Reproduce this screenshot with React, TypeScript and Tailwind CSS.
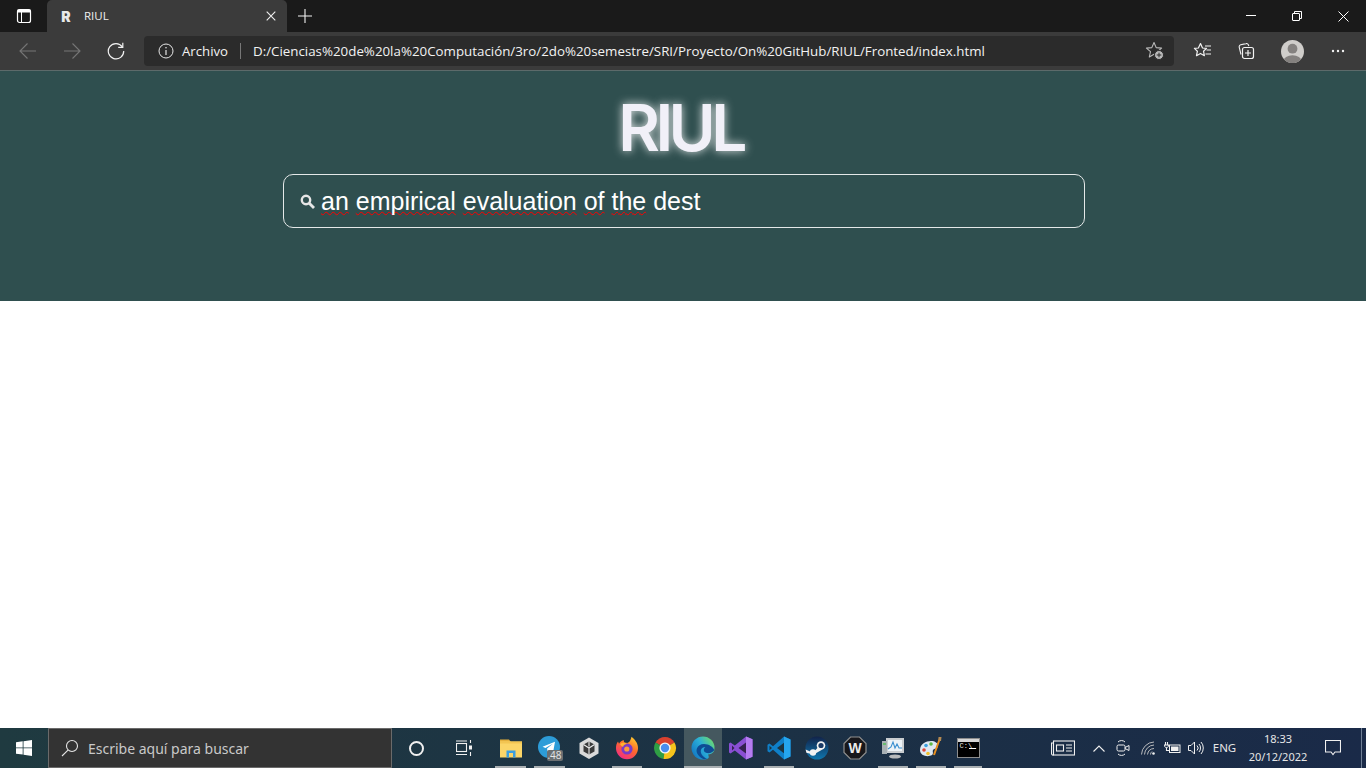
import type { ReactNode } from 'react'

const chromeFont = "font-['Open_Sans',sans-serif]"

function Win({ children, w = 16, h = 16, vb = '0 0 16 16' }: { children: ReactNode; w?: number; h?: number; vb?: string }) {
  return (
    <svg width={w} height={h} viewBox={vb} fill="none" className="block shrink-0">
      {children}
    </svg>
  )
}

/* Browser chrome icons */
function TabActionsIcon() {
  return (
    <Win w={16} h={16}>
      <rect x="1.5" y="1.5" width="13" height="13" rx="2" stroke="#fff" strokeWidth="1.2" />
      <rect x="1.5" y="1.5" width="13" height="3" fill="#fff" />
      <path d="M5.5 4v10" stroke="#fff" strokeWidth="1" />
    </Win>
  )
}

function ArrowIcon({ flip }: { flip?: boolean }) {
  return (
    <Win w={18} h={18} vb="0 0 18 18">
      <g transform={flip ? 'matrix(-1 0 0 1 18 0)' : undefined} stroke="#767676" strokeWidth="1.1">
        <path d="M1 9h16M8.5 1.5 1 9l7.5 7.5" />
      </g>
    </Win>
  )
}

function RefreshIcon() {
  return (
    <Win w={18} h={18} vb="0 0 18 18">
      <path d="M15.3 4.8A7.7 7.7 0 1 0 16.7 9" stroke="#f2f2f2" strokeWidth="1.2" />
      <path d="M15.8 0.8v4.6h-4.6" stroke="#f2f2f2" strokeWidth="1.2" />
    </Win>
  )
}

function InfoIcon() {
  return (
    <Win w={16} h={16}>
      <circle cx="8" cy="8" r="7" stroke="#e6e6e6" strokeWidth="1" />
      <path d="M8 7v5" stroke="#e6e6e6" strokeWidth="1.2" />
      <circle cx="8" cy="4.8" r="0.8" fill="#e6e6e6" />
    </Win>
  )
}

const starPath = 'M9 1.5 11.2 6.6 16.6 7.1 12.5 10.7 13.7 16 9 13.2 4.3 16 5.5 10.7 1.4 7.1 6.8 6.6Z'

function AddFavoriteIcon() {
  return (
    <Win w={20} h={20} vb="0 0 20 20">
      <path d={starPath} stroke="#b9b9b9" strokeWidth="1.1" strokeLinejoin="round" />
      <circle cx="14" cy="14" r="4.5" fill="#b9b9b9" stroke="#2b2b2b" />
      <path d="M14 11.7v4.6M11.7 14h4.6" stroke="#2b2b2b" strokeWidth="1" />
    </Win>
  )
}

function FavoritesIcon() {
  return (
    <Win w={20} h={20} vb="0 0 20 20">
      <path d="M7.5 2.5 9.5 7l4 .4-3 2.8.9 4.5-3.900-2.300-4 2.300.9-4.500-3-2.800 4-.4Z" stroke="#f2f2f2" strokeWidth="1.2" strokeLinejoin="round" />
      <path d="M12 5h6M13.500 9H18M12.500 13H18" stroke="#f2f2f2" strokeWidth="1.2" />
    </Win>
  )
}

function CollectionsIcon() {
  return (
    <Win w={20} h={20} vb="0 0 20 20">
      <path d="M5 13.5 3.2 6.2a2 2 0 0 1 1.500-2.400L10 2.600a2 2 0 0 1 2.300 1.100l.6 1.300" stroke="#f2f2f2" strokeWidth="1.1" />
      <rect x="6.5" y="6.5" width="11" height="11" rx="2" stroke="#f2f2f2" strokeWidth="1.2" fill="#3b3b3b" />
      <path d="M12 9v6M9 12h6" stroke="#f2f2f2" strokeWidth="1.2" />
    </Win>
  )
}

function ProfileIcon() {
  return (
    <svg width="23" height="23" viewBox="0 0 23 23" className="block shrink-0">
      <clipPath id="profile-clip">
        <circle cx="11.5" cy="11.5" r="11.5" />
      </clipPath>
      <g clipPath="url(#profile-clip)">
        <rect width="23" height="23" fill="#cfcdca" />
        <circle cx="11.5" cy="8.7" r="4.9" fill="#84817f" />
        <ellipse cx="11.5" cy="21" rx="9" ry="5.8" fill="#84817f" />
      </g>
    </svg>
  )
}

/* Taskbar app icons */
function FolderIcon() {
  return (
    <Win w={24} h={24} vb="0 0 24 24">
      <path d="M1 3.5h9l2 2.500H1Z" fill="#e5b03c" />
      <rect x="1" y="5.5" width="22" height="16" fill="#fbd568" />
      <rect x="1" y="5.5" width="22" height="2" fill="#f3c552" />
      <path d="M7.5 21.5v-7h9v7h-2.500v-4.500h-4v4.500Z" fill="#3a9ee0" />
    </Win>
  )
}

function TelegramIcon() {
  return (
    <div className="relative w-6 h-6">
      <Win w={22} h={22} vb="0 0 22 22">
        <circle cx="11" cy="11" r="11" fill="#2d9cd8" />
        <path d="M4.5 10.8 17 5.800l-2 11-3.600-2.700-1.900 1.900-.4-3.400 6-5.200-7.600 4.600Z" fill="#fff" />
      </Win>
      <span className="absolute left-[9px] top-[14px] w-[16px] h-[11px] bg-[#6b6f72] rounded-[2px] text-[10px] leading-[11px] text-[#e6e6e6] text-center font-['Open_Sans',sans-serif]">
        .48
      </span>
    </div>
  )
}

function UnityIcon() {
  return (
    <Win w={22} h={22} vb="0 0 22 22">
      <path d="M11 .5 20.500 6v10.500L11 22l-9.500-5.500V6Z" fill="#dadada" />
      <path d="M11 4.500 16.500 7.500v7L11 17.500l-5.500-3v-7Z" fill="#3a3a3a" />
      <path d="M11 4.500V9.500M5.500 7.500 11 11l5.500-3.500M11 11v6.500" stroke="#ececec" strokeWidth="1.100" />
    </Win>
  )
}

function FirefoxIcon() {
  return (
    <Win w={24} h={24} vb="0 0 24 24">
      <defs>
        <linearGradient id="ff" x1="0.8" y1="0" x2="0.2" y2="1">
          <stop offset="0" stopColor="#ffcb2e" />
          <stop offset="0.45" stopColor="#ff6a2b" />
          <stop offset="1" stopColor="#f0268a" />
        </linearGradient>
      </defs>
      <path d="M16.5 0.8c3 2.600 6.500 6 6.500 11.400A11 11 0 0 1 1 12.200c0-2.400.5-4.800 2-6.600l1 2.200C5.200 5.600 7 4.200 9 4.200c-.6 1.400.2 2.200 2 2.600 3.400.8 4.600-2.600 5.500-6Z" fill="url(#ff)" />
      <circle cx="12" cy="13" r="5.600" fill="#7b3bc6" />
      <circle cx="11.8" cy="13" r="2.600" fill="#ff9a3c" />
      <path d="M5 8c2-1.800 5-1.600 7 0-2 .2-3.500 1-4 3-1.300-.6-2.300-1.600-3-3Z" fill="#ffb12e" />
    </Win>
  )
}

function ChromeIcon() {
  return (
    <Win w={24} h={24} vb="0 0 24 24">
      <path d="M12 12 2.500 6.500A11 11 0 0 1 21.500 6.500Z" fill="#d9412f" />
      <path d="M2.500 6.500A11 11 0 0 0 10.500 22.900L12 12Z" fill="#2f9e44" />
      <path d="M21.500 6.500A11 11 0 0 1 10.500 22.900L12 12Z" fill="#f6c41c" />
      <circle cx="12" cy="12" r="5.600" fill="#f4f4f4" />
      <circle cx="12" cy="12" r="4.200" fill="#4a8ef0" />
    </Win>
  )
}

function EdgeIcon() {
  return (
    <Win w={24} h={24} vb="0 0 24 24">
      <defs>
        <linearGradient id="edge-a" x1="0" y1="0.9" x2="1" y2="0.2">
          <stop offset="0" stopColor="#0f6fc0" />
          <stop offset="0.55" stopColor="#2aaed8" />
          <stop offset="1" stopColor="#6fdc6a" />
        </linearGradient>
      </defs>
      <circle cx="12" cy="12" r="11.500" fill="url(#edge-a)" />
      <path d="M8 20C3 15 6 8 13 8c5 0 9 3 10.400 6-1.400 3-6.400 4-8.900 2.500-2.500-1.500-2-4 0-5.500-4.500 0-6 4-3.500 8 1.500 2 3 3 5 3.800-3 1.200-6-.8-8-2.800Z" fill="#0e4c94" />
      <path d="M17 23c3-1 5.500-4 6.500-8-2 2.500-4.500 3.500-6.500 3.500 1 1.500 1 3.500 0 4.500Z" fill="#45585f" />
    </Win>
  )
}

function VisualStudioIcon() {
  return (
    <Win w={24} h={24} vb="0 0 24 24">
      <path d="M17 0.500 23.500 3.300v17.400L17 23.500 5.800 14.500 1.500 17.500 0 16.500V7.500l1.500-1 4.300 3Z" fill="#8a4fd3" />
      <path d="M17 0.500 23.500 3.300v17.400L17 23.500Z" fill="#b57cf0" />
      <path d="M17 6.500 9.500 12l7.500 5.500ZM3 9.500v5L5.500 12Z" fill="#34214f" />
    </Win>
  )
}

function VsCodeIcon() {
  return (
    <Win w={24} h={24} vb="0 0 24 24">
      <path d="M17 0.500 23.500 3.500v17L17 23.500 6 13.800l-3.500 2.700L.5 15.300V8.700l2-1.200L6 10.200Z" fill="#0f7fc8" />
      <path d="M17 0.500 23.500 3.500v17L17 23.500Z" fill="#25a5ee" />
      <path d="M17 6.800 10 12l7 5.200Z" fill="#1c3440" />
      <path d="M2.500 9.700v4.600L5 12Z" fill="#1c3440" />
    </Win>
  )
}

function SteamIcon() {
  return (
    <Win w={24} h={24} vb="0 0 24 24">
      <defs>
        <linearGradient id="steam" x1="0" y1="0" x2="0" y2="1">
          <stop offset="0" stopColor="#12234a" />
          <stop offset="1" stopColor="#0f76ae" />
        </linearGradient>
      </defs>
      <circle cx="12" cy="12" r="11.500" fill="url(#steam)" />
      <path d="M.6 13.500 8 16.800l6.500-7 2.500 4-8.400 4.800-.5 0L1.400 16.800Z" fill="#f2f2f2" />
      <circle cx="16" cy="9.500" r="4.300" fill="#f2f2f2" />
      <circle cx="16" cy="9.500" r="2.600" fill="#1a3a66" />
      <circle cx="8" cy="16.500" r="3.200" fill="#f2f2f2" />
    </Win>
  )
}

function WinampIcon() {
  return (
    <Win w={24} h={24} vb="0 0 24 24">
      <path d="M7.500 1h9L23 7.500v9L16.500 23h-9L1 16.500v-9Z" fill="#17171b" stroke="#8f8f8f" strokeWidth="1.200" />
      <text x="12" y="17" textAnchor="middle" fontFamily="Liberation Sans, sans-serif" fontWeight="700" fontSize="14" fill="#ececec">
        W
      </text>
    </Win>
  )
}

function PerfIcon() {
  return (
    <Win w={24} h={24} vb="0 0 24 24">
      <rect x="5" y="2" width="18" height="15" fill="#c9cdd0" />
      <rect x="7" y="4" width="14" height="11" fill="#edf3f7" />
      <path d="M7 13 10 11l2-5 2 6 2-4 2 4h3" stroke="#3a8fd0" strokeWidth="1.100" />
      <rect x="1" y="5" width="5" height="13" fill="#a8b0b4" />
      <path d="M2 8h3" stroke="#55c05a" strokeWidth="1.500" />
      <ellipse cx="14" cy="20.500" rx="6" ry="2" fill="#b6b9bb" />
    </Win>
  )
}

function PaintIcon() {
  return (
    <Win w={24} h={24} vb="0 0 24 24">
      <path d="M1 14c0-6 6-9 11-9 4 0 7 2 7 5 0 3-4 2-5 4-.8 1.700 1 3.500-1 5-4 2.500-12 1-12-5Z" fill="#dfe9f2" />
      <circle cx="7" cy="9.500" r="1.800" fill="#3aa0e0" />
      <circle cx="12" cy="8" r="1.800" fill="#5dbb46" />
      <circle cx="5" cy="14" r="1.800" fill="#e0483a" />
      <circle cx="9" cy="17.500" r="1.800" fill="#f0c02e" />
      <path d="M21 2 15 19" stroke="#e88f1f" strokeWidth="2" />
      <path d="M19.500 1h3l-.5 4h-2.500Z" fill="#b58a52" />
    </Win>
  )
}

function CmdIcon() {
  return (
    <div className="relative w-[23px] h-[20px] bg-black border border-[#8d8d8d]">
      <div className="h-[3px] bg-[#d6d6d6]" />
      <span className="absolute left-[2px] top-[3px] text-[7px] leading-[9px] text-[#e8e8e8] font-['Liberation_Mono',monospace]">C:\_</span>
      <div className="absolute right-[3px] top-[9px] w-[7px] h-px bg-white" />
    </div>
  )
}

const taskbarApps = [
  { icon: <FolderIcon />, open: true, w: 'w-[39px]' },
  { icon: <TelegramIcon />, open: true, w: 'w-[39px]' },
  { icon: <UnityIcon />, open: false, w: 'w-[39px]' },
  { icon: <FirefoxIcon />, open: true, w: 'w-[38px]' },
  { icon: <ChromeIcon />, open: false, w: 'w-[38px]' },
  { icon: <EdgeIcon />, open: true, active: true, w: 'w-[38px]' },
  { icon: <VisualStudioIcon />, open: false, w: 'w-[38px]' },
  { icon: <VsCodeIcon />, open: true, w: 'w-[38px]' },
  { icon: <SteamIcon />, open: false, w: 'w-[38px]' },
  { icon: <WinampIcon />, open: false, w: 'w-[38px]' },
  { icon: <PerfIcon />, open: true, w: 'w-[38px]' },
  { icon: <PaintIcon />, open: true, w: 'w-[38px]' },
  { icon: <CmdIcon />, open: true, w: 'w-[36px]' },
]

function TaskbarApp({ icon, open, active, w }: { icon: ReactNode; open: boolean; active?: boolean; w: string }) {
  return (
    <div className={`relative ${w} h-10 flex items-center justify-center ${active ? 'bg-[#45585f]' : ''}`}>
      {icon}
      {open && <div className="absolute bottom-0 left-[4px] right-[4px] h-[2px] bg-[#a9afb2]" />}
      {active && <div className="absolute bottom-0 left-0 right-0 h-[2px] bg-[#a9afb2]" />}
    </div>
  )
}

function Tray({ w, children }: { w: string; children: ReactNode }) {
  return <div className={`${w} h-10 flex items-center justify-center`}>{children}</div>
}

function Misspelled({ children }: { children: ReactNode }) {
  return (
    <span className="underline decoration-wavy decoration-[#ff0000] decoration-[1.25px] underline-offset-1 [text-decoration-skip-ink:none]">
      {children}
    </span>
  )
}

export default function App() {
  return (
    <div className={`h-screen flex flex-col overflow-hidden bg-white ${chromeFont}`}>
      {/* Tab strip */}
      <div className="h-8 shrink-0 bg-[#1a1a1a] flex text-white">
        <div className="w-[47px] flex items-center justify-center">
          <TabActionsIcon />
        </div>
        <div className="w-[240px] bg-[#3b3b3b] rounded-t-[5px] flex items-center pl-[13px] pr-[11px]">
          <span className="w-[12px] text-center text-[14px] font-black text-[#e9e9e9] font-['Inter',sans-serif]">R</span>
          <span className="ml-[12px] text-[11.5px] text-[#f0f0f0]">RIUL</span>
          <svg width="10" height="10" viewBox="0 0 10 10" className="ml-auto block" stroke="#f0f0f0" strokeWidth="1.1">
            <path d="M.7.7l8.600 8.600M9.300.7.700 9.300" />
          </svg>
        </div>
        <div className="w-9 flex items-center justify-center">
          <svg width="14" height="14" viewBox="0 0 14 14" stroke="#f2f2f2" strokeWidth="1.1" className="block">
            <path d="M7 0v14M0 7h14" />
          </svg>
        </div>
        {/* Window controls */}
        <div className="ml-auto flex">
          <div className="w-[46px] flex items-center justify-center">
            <svg width="10" height="10" viewBox="0 0 10 10" stroke="#fff" className="block">
              <path d="M0 4.500h10" />
            </svg>
          </div>
          <div className="w-[46px] flex items-center justify-center">
            <svg width="10" height="10" viewBox="0 0 10 10" stroke="#fff" fill="none" className="block">
              <rect x="0.500" y="2.500" width="7" height="7" rx="0.500" />
              <path d="M2.500 2.500V.5h7v7H7.500" />
            </svg>
          </div>
          <div className="w-[46px] flex items-center justify-center">
            <svg width="11" height="11" viewBox="0 0 11 11" stroke="#fff" className="block">
              <path d="M.5.500l10 10M10.500.5l-10 10" />
            </svg>
          </div>
        </div>
      </div>

      {/* Toolbar */}
      <div className="h-[39px] shrink-0 bg-[#3b3b3b] border-b border-[#5c6a6a] flex items-center">
        <div className="w-[50px] flex justify-center pl-[6px]">
          <ArrowIcon />
        </div>
        <div className="w-[44px] flex justify-center">
          <ArrowIcon flip />
        </div>
        <div className="w-[44px] flex justify-center">
          <RefreshIcon />
        </div>
        <div className="ml-[6px] w-[1030px] h-[30px] bg-[#2b2b2b] rounded-[4px] flex items-center pl-[14px] pr-[9px] text-[#f2f2f2]">
          <InfoIcon />
          <span className="ml-[8px] pt-[2px] text-[13.2px]">Archivo</span>
          <span className="ml-[12px] w-px h-[16px] bg-[#777]" />
          <span className="ml-[12px] pt-[2px] text-[13.33px] whitespace-nowrap">D:/Ciencias%20de%20la%20Computación/3ro/2do%20semestre/SRI/Proyecto/On%20GitHub/RIUL/Fronted/index.html</span>
          <div className="ml-auto">
            <AddFavoriteIcon />
          </div>
        </div>
        <div className="w-[56px] flex justify-center pl-[1px]">
          <FavoritesIcon />
        </div>
        <div className="w-[32px] flex justify-center">
          <CollectionsIcon />
        </div>
        <div className="w-[60px] flex justify-center">
          <ProfileIcon />
        </div>
        <div className="w-[32px] flex justify-center">
          <svg width="14" height="4" viewBox="0 0 14 4" fill="#f2f2f2" className="block">
            <circle cx="2" cy="2" r="1.200" />
            <circle cx="7" cy="2" r="1.200" />
            <circle cx="12" cy="2" r="1.200" />
          </svg>
        </div>
      </div>

      {/* Page header */}
      <header className="h-[230px] shrink-0 bg-[#2f4f4f] flex flex-col items-center pt-[17px]">
        <h1 className="-ml-[5px] h-[86px] text-[64px] leading-[80px] font-semibold tracking-[-4.5px] text-[#f1f0f8] font-['Inter',sans-serif] [text-shadow:0_0_10px_rgba(255,255,255,0.85)]">
          RIUL
        </h1>
        <div className="ml-[2px] w-[802px] h-[54px] shrink-0 border border-[#e4e8e8] rounded-[10px] flex items-center pl-[16px] text-white font-['Liberation_Sans',sans-serif]">
          <svg width="15" height="15" viewBox="0 0 15 15" fill="none" className="block shrink-0">
            <circle cx="6" cy="6" r="4.200" stroke="#e6e6e6" strokeWidth="2.400" />
            <path d="M9 9l5 5" stroke="#e6e6e6" strokeWidth="2.800" />
          </svg>
          <div className="ml-[6px] pt-[2px] text-[25px] whitespace-pre">
            <Misspelled>an</Misspelled> <Misspelled>empirical</Misspelled> <Misspelled>evaluation</Misspelled> <Misspelled>of</Misspelled> <Misspelled>the</Misspelled> dest
          </div>
        </div>
      </header>

      <main className="flex-1 bg-white" />

      {/* Windows taskbar */}
      <footer className="h-10 shrink-0 bg-linear-to-r from-[#1f3a40] to-[#1a2a48] flex items-center text-[#e6e6e6] font-['Noto_Sans',sans-serif]">
        <Tray w="w-12">
          <svg width="16" height="16" viewBox="0 0 16 16" fill="#fff" className="block">
            <path d="M0 2.300 6.700 1.300v6.200H0ZM7.500 1.200 16 0v7.500H7.500ZM0 8.300h6.700v6.300L0 13.700ZM7.500 8.300H16V16l-8.500-1.200Z" />
          </svg>
        </Tray>
        <div className="w-[344px] h-10 bg-[#333333] border border-[#6a6a6a] flex items-center pl-[12px]">
          <svg width="18" height="18" viewBox="0 0 18 18" fill="none" stroke="#e6e6e6" strokeWidth="1.100" className="block">
            <circle cx="11" cy="7" r="5.500" />
            <path d="M7 11.200 1 17" />
          </svg>
          <span className="ml-[9px] text-[14px] text-[#c9c9c9]">Escribe aquí para buscar</span>
        </div>
        <Tray w="w-12">
          <div className="w-[15px] h-[15px] rounded-full border-2 border-[#f0f0f0]" />
        </Tray>
        <Tray w="w-[47px]">
          <svg width="16" height="16" viewBox="0 0 16 16" fill="none" stroke="#f0f0f0" strokeWidth="1.100" className="block">
            <rect x="0.500" y="3.500" width="10" height="8" />
            <path d="M0 1h11M0 14.500h11M14.500 0v3M14.500 12v4" />
            <rect x="13" y="5.500" width="3" height="4" fill="#f0f0f0" stroke="none" />
          </svg>
        </Tray>
        <div className="w-[4px]" />
        {taskbarApps.map((app, i) => (
          <TaskbarApp key={i} icon={app.icon} open={app.open} active={app.active} w={app.w} />
        ))}

        {/* System tray */}
        <div className="ml-auto flex items-center">
          <Tray w="w-[36px]">
            <svg width="24" height="16" viewBox="0 0 24 16" fill="none" stroke="#f0f0f0" strokeWidth="1.100" className="block">
              <rect x="2.500" y="1" width="21" height="14" />
              <path d="M2.500 3H.5v10.500A1.500 1.500 0 0 0 2.500 15" />
              <rect x="5.500" y="5" width="7" height="6" />
              <path d="M15 5h6M15 8h6M15 11h6" />
            </svg>
          </Tray>
          <div className="w-[6px]" />
          <Tray w="w-[24px]">
            <svg width="12" height="7" viewBox="0 0 12 7" fill="none" stroke="#f0f0f0" strokeWidth="1.100" className="block">
              <path d="M.5 6.500 6 1l5.500 5.500" />
            </svg>
          </Tray>
          <Tray w="w-[24px]">
            <svg width="14" height="18" viewBox="0 0 14 18" fill="none" stroke="#f0f0f0" strokeWidth="1" className="block">
              <path d="M2 3a5 5 0 0 1 7 0M2 15a5 5 0 0 0 7 0" />
              <rect x="1" y="6" width="8" height="6" rx="1.500" />
              <path d="M9 8.500l4-2v5l-4-2" />
            </svg>
          </Tray>
          <Tray w="w-[25px]">
            <svg width="14" height="14" viewBox="0 0 14 14" fill="none" stroke="#c9c9c9" strokeWidth="0.900" className="block">
              <path d="M.5 13.500A13 13 0 0 1 13 1M3.500 13.500A10 10 0 0 1 13 4M6.500 13.500A7 7 0 0 1 13 7.500M9.500 13.500A4 4 0 0 1 11 10.500" />
              <circle cx="12.500" cy="12.500" r="1.300" fill="#f0f0f0" stroke="none" />
            </svg>
          </Tray>
          <Tray w="w-[24px]">
            <svg width="17" height="12" viewBox="0 0 17 12" fill="none" stroke="#f0f0f0" strokeWidth="1" className="block">
              <rect x="5.500" y="3" width="10.500" height="7.500" />
              <rect x="7" y="4.500" width="7.500" height="4.500" fill="#f0f0f0" stroke="none" />
              <path d="M0 3h5M1.500 0v3M3.500 0v3M2.500 5.500v3h3" strokeWidth="1.100" />
              <path d="M.7 3v1.500a2 2 0 0 0 3.600 0V3" />
            </svg>
          </Tray>
          <Tray w="w-[23px]">
            <svg width="16" height="14" viewBox="0 0 16 14" fill="none" stroke="#f0f0f0" strokeWidth="1" className="block">
              <path d="M.5 4.500h2.500L6.500 1v12L3 9.500H.5Z" />
              <path d="M9 4.500a3.500 3.500 0 0 1 0 5M11 3a6 6 0 0 1 0 8M13 1a9 9 0 0 1 0 12" />
            </svg>
          </Tray>
          <Tray w="w-[35px]">
            <span className="text-[11.5px]">ENG</span>
          </Tray>
          <div className="w-[72px] h-10 flex flex-col items-center justify-center text-[11px] leading-[18px]">
            <span>18:33</span>
            <span>20/12/2022</span>
          </div>
          <Tray w="w-[38px]">
            <svg width="16" height="16" viewBox="0 0 16 16" fill="none" stroke="#f0f0f0" strokeWidth="1.100" className="block">
              <path d="M.5.500h15v11.500h-5.500l-2 2.500-2-2.500H.5Z" />
            </svg>
          </Tray>
          <div className="w-[14px] h-10 flex justify-end pr-[4px]">
            <div className="w-px h-10 bg-[#6f7f95]" />
          </div>
        </div>
      </footer>
    </div>
  )
}
